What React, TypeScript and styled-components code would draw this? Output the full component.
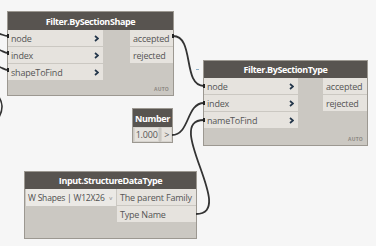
import React from "react";
import styled, { createGlobalStyle } from "styled-components";

const GlobalStyle = createGlobalStyle`
  html, body {
    margin: 0;
    padding: 0;
    background: #f6f6f6;
  }
`;

// canvas de fundo
const Canvas = styled.div`
  position: relative;
  width: 376px;
  height: 246px;
  overflow: hidden;
  background: #f6f6f6;
  font-family: "Open Sans", "Liberation Sans", sans-serif;
`;

const Wires = styled.svg`
  position: absolute;
  left: 0;
  top: 0;
  width: 376px;
  height: 246px;
  pointer-events: none;
  z-index: 2;
`;

// nó do grafo
const Node = styled.div<{ $left: number; $top: number; $width: number; $height: number }>`
  position: absolute;
  left: ${(p) => p.$left}px;
  top: ${(p) => p.$top}px;
  width: ${(p) => p.$width}px;
  height: ${(p) => p.$height}px;
  box-sizing: border-box;
  display: flex;
  flex-direction: column;
  background: #cbc8c2;
  border: 1px solid #9c9891;
  z-index: 1;
`;

const Header = styled.div<{ $height: number }>`
  height: ${(p) => p.$height}px;
  flex: none;
  display: flex;
  align-items: center;
  justify-content: center;
  background: #585450;
  color: #fff;
  font-size: 9px;
  font-weight: 700;
  letter-spacing: -0.4px;
  white-space: nowrap;
`;

const Body = styled.div`
  display: flex;
  justify-content: space-between;
  align-items: flex-start;
`;

const Column = styled.div<{ $width: number }>`
  width: ${(p) => p.$width}px;
  display: flex;
  flex-direction: column;
  gap: 1px;
`;

const PortRow = styled.div<{ $out?: boolean }>`
  height: 16px;
  display: flex;
  align-items: center;
  justify-content: space-between;
  padding: 0 ${(p) => (p.$out ? 3 : 4)}px 0 3px;
  background: #e6e3de;
  color: #555;
  font-size: 9px;
  letter-spacing: -0.2px;
  white-space: nowrap;
`;

const Chevron = () => (
  <svg width="5" height="7" viewBox="0 0 5 7">
    <polyline points="1,1 4,3.5 1,6" fill="none" stroke="#23364a" strokeWidth="1.7" />
  </svg>
);

const Auto = styled.span`
  position: absolute;
  right: 4px;
  bottom: 3px;
  font-size: 5px;
  font-weight: 700;
  color: #8d8983;
  letter-spacing: 0.2px;
`;

const ValueRow = styled.div`
  display: flex;
  gap: 2px;
  padding-left: 1px;
  height: 15px;
`;

const ValueBox = styled.div<{ $width: number }>`
  width: ${(p) => p.$width}px;
  box-sizing: border-box;
  display: flex;
  align-items: center;
  justify-content: center;
  background: #e6e3de;
  border: 1px solid #d6d3ce;
  color: #555;
  font-size: 9px;
  letter-spacing: -0.2px;
`;

const Dropdown = styled.div`
  width: 90px;
  height: 17px;
  box-sizing: border-box;
  margin-left: 1px;
  display: flex;
  align-items: center;
  justify-content: space-between;
  padding: 0 4px 0 2px;
  background: #ebe9e5;
  color: #4e4e4e;
  font-size: 8.5px;
  letter-spacing: -0.2px;
  white-space: nowrap;
`;

const Caret = styled.span`
  font-size: 6px;
  color: #888;
`;

// pequeno traço azul perto do fio
const Dash = styled.span`
  position: absolute;
  left: 196px;
  top: 69px;
  width: 3px;
  height: 1px;
  background: #8fb0c8;
`;

type Props = { x1: number; y1: number; x2: number; y2: number; d?: number };

const Wire = ({ x1, y1, x2, y2, d = 20 }: Props) => (
  <path
    d={`M ${x1} ${y1} C ${x1 + d} ${y1}, ${x2 - d} ${y2}, ${x2} ${y2}`}
    fill="none"
    stroke="#333"
    strokeWidth="1.8"
  />
);

const Nub = ({ x, y }: { x: number; y: number }) => (
  <rect x={x} y={y - 2} width="2" height="4" fill="#222" />
);

export default function App() {
  return (
    <>
      <GlobalStyle />
      <Canvas>
        <Node $left={7} $top={11} $width={167} $height={85}>
          <Header $height={18}>Filter.BySectionShape</Header>
          <Body>
            <Column $width={95}>
              <PortRow>node<Chevron /></PortRow>
              <PortRow>index<Chevron /></PortRow>
              <PortRow>shapeToFind<Chevron /></PortRow>
            </Column>
            <Column $width={43}>
              <PortRow $out>accepted</PortRow>
              <PortRow $out>rejected</PortRow>
            </Column>
          </Body>
          <Auto>AUTO</Auto>
        </Node>

        <Node $left={203} $top={60} $width={165} $height={86}>
          <Header $height={17}>Filter.BySectionType</Header>
          <Body>
            <Column $width={94}>
              <PortRow>node<Chevron /></PortRow>
              <PortRow>index<Chevron /></PortRow>
              <PortRow>nameToFind<Chevron /></PortRow>
            </Column>
            <Column $width={44}>
              <PortRow $out>accepted</PortRow>
              <PortRow $out>rejected</PortRow>
            </Column>
          </Body>
          <Auto>AUTO</Auto>
        </Node>

        <Node $left={132} $top={108} $width={41} $height={35}>
          <Header $height={18}>Number</Header>
          <ValueRow>
            <ValueBox $width={26}>1.000</ValueBox>
            <ValueBox $width={11}>&gt;</ValueBox>
          </ValueRow>
        </Node>

        <Node $left={24} $top={171} $width={173} $height={68}>
          <Header $height={17}>Input.StructureDataType</Header>
          <Body>
            <Dropdown>
              W Shapes | W12X26<Caret>v</Caret>
            </Dropdown>
            <Column $width={79}>
              <PortRow $out>The parent Family</PortRow>
              <PortRow $out>Type Name</PortRow>
            </Column>
          </Body>
        </Node>

        <Dash />

        <Wires viewBox="0 0 376 246">
          <path d="M -4 33 C 2 34, 4 36, 8 36" fill="none" stroke="#333" strokeWidth="1.8" />
          <path d="M -4 49 C 2 50, 4 53, 8 53" fill="none" stroke="#333" strokeWidth="1.8" />
          <path d="M -4 66 C 2 67, 4 70, 8 70" fill="none" stroke="#333" strokeWidth="1.8" />
          <path d="M -2 96 C 3 102, 3 110, -1 117" fill="none" stroke="#333" strokeWidth="1.8" />
          <Wire x1={173} y1={36} x2={204} y2={86} d={22} />
          <Wire x1={172} y1={135} x2={204} y2={103} d={18} />
          <Wire x1={196} y1={214} x2={204} y2={120} d={42} />
          <Nub x={7} y={36} />
          <Nub x={7} y={53} />
          <Nub x={7} y={70} />
          <Nub x={172} y={36} />
          <Nub x={203} y={86} />
          <Nub x={203} y={103} />
          <Nub x={203} y={120} />
        </Wires>
      </Canvas>
    </>
  );
}
